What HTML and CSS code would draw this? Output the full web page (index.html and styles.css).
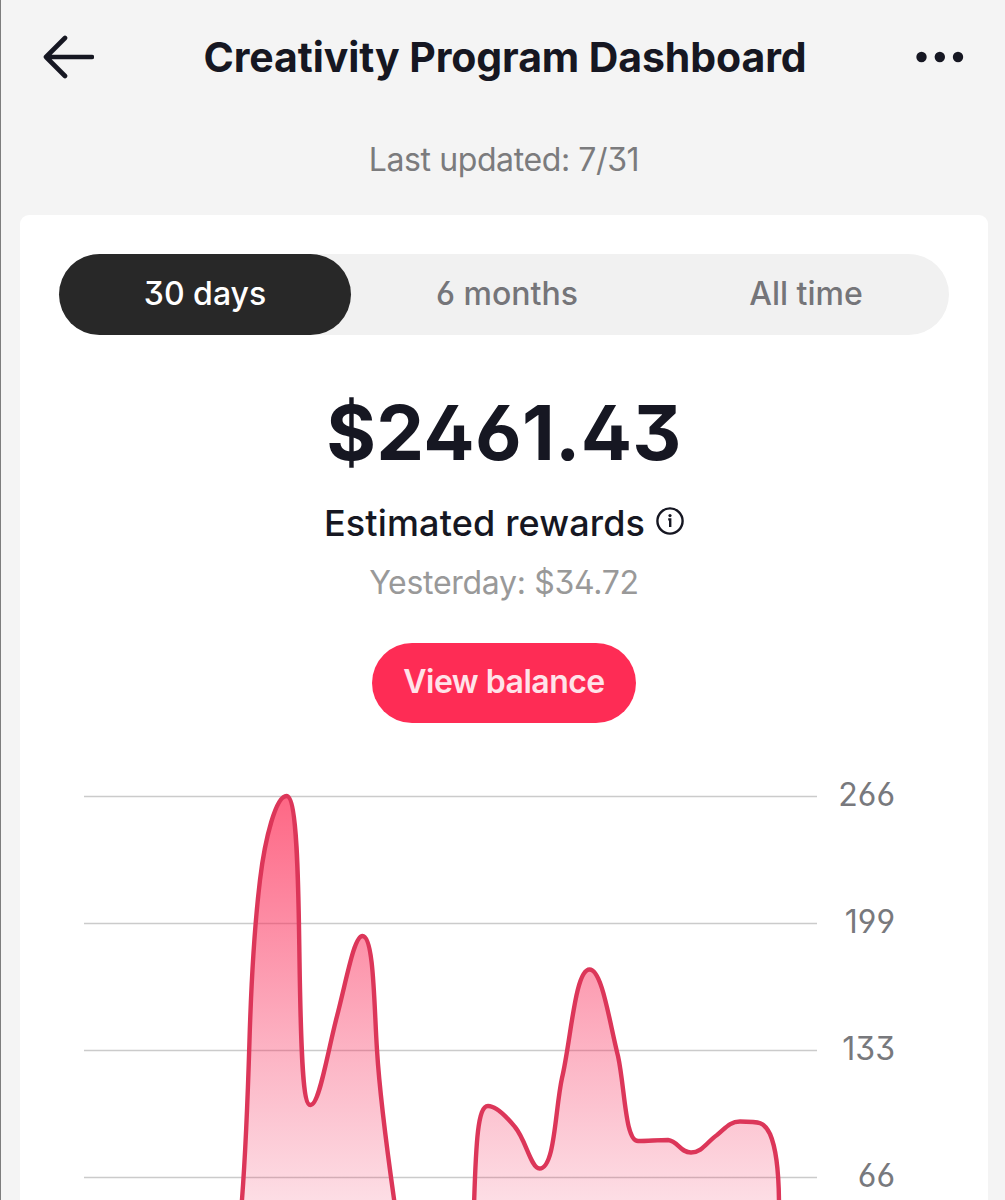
FILE: index.html
```html
<!DOCTYPE html>
<html lang="en">

<head>
    <meta charset="UTF-8">
    <title>Creativity Program Dashboard</title>
    <link rel="stylesheet" href="styles.css">
</head>

<body>
    <header class="topbar">
        <svg class="back" width="52" height="44" viewBox="0 0 52 44">
            <path d="M23 3 L4 22 L23 41 M4 22 H50" />
        </svg>
        <h1>Creativity Program Dashboard</h1>
        <svg class="more" width="48" height="12" viewBox="0 0 48 12">
            <circle cx="5.5" cy="6" r="5.2" />
            <circle cx="23.8" cy="6" r="5.2" />
            <circle cx="42" cy="6" r="5.2" />
        </svg>
    </header>
    <p class="updated">Last updated: 7/31</p>

    <main class="card">
        <div class="tabs">
            <div class="tab active">30 days</div>
            <div class="tab">6 months</div>
            <div class="tab">All time</div>
        </div>

        <div class="amount">$2461.43</div>
        <div class="rewards">
            <span>Estimated rewards</span>
            <svg class="info" width="28" height="28" viewBox="0 0 28 28">
                <circle class="ring" cx="14" cy="14" r="12.6" />
                <circle cx="14" cy="8.6" r="1.6" />
                <path d="M12.2 12.4 H14.2 V20" />
            </svg>
        </div>
        <div class="yesterday">Yesterday: $34.72</div>
        <div class="balance">View balance</div>

        <div class="chart">
            <svg class="plot" width="734" height="420" viewBox="84 780 734 420">
                <defs>
                    <linearGradient id="fade" gradientUnits="userSpaceOnUse" x1="0" y1="795" x2="0" y2="1200">
                        <stop offset="0" stop-color="#fe2c55" stop-opacity="0.72" />
                        <stop offset="0.32" stop-color="#fb2c58" stop-opacity="0.54" />
                        <stop offset="0.63" stop-color="#f82c5a" stop-opacity="0.36" />
                        <stop offset="1" stop-color="#f22c5a" stop-opacity="0.16" />
                    </linearGradient>
                </defs>
                <path class="grid" d="M84 796.5 H817 M84 923.5 H817 M84 1050.5 H817 M84 1177.5 H817" />
                <path class="area" d="M241.5 1206 C246 1150 248 1090 249.5 1040 C251 990 254 930 260 880 C265 838 276 796 286.5 796 C298 796 298.5 895 299.5 960 C301 1060 303 1105 310.5 1105 C319 1105 326 1060 336 1020 C347 978 354 936 362.5 936 C374 936 374 1005 377 1050 C380 1100 387 1150 395 1206" />
                <path class="area" d="M474 1206 C476 1140 478 1106 488 1106 C498 1106 510 1121 515 1127 C526 1140 531 1168.5 539.5 1168.5 C555 1168.5 555 1110 562 1078 C571 1040 575 969.5 589.5 969.5 C602 969.5 609 1020 618 1056 C625 1088 625 1141 638 1141 C648 1141 658 1140 668 1140 C678 1141 680 1152.5 691 1152.5 C702 1152.5 707 1142 717 1135 C725 1129 729 1121.5 740 1121.5 C760 1121.5 764 1122 770 1134 C777 1150 779 1180 779 1206" />
            </svg>
            <div class="scale">
                <span>266</span>
                <span>199</span>
                <span>133</span>
                <span>66</span>
            </div>
        </div>
    </main>
</body>

</html>
```
FILE: styles.css
```css
body {
    box-sizing: border-box;
    width: 1005px;
    height: 1200px;
    margin: 0;
    padding-right: 17px;
    padding-left: 19px;
    border-left: 1px solid #7d7d7d;
    background-color: #f4f4f4;
    color: #161722;
    font-family: Inter, "Liberation Sans", sans-serif;
    font-feature-settings: "ss01", "cv09";
    font-size: 32px;
    overflow: hidden;
}

.topbar {
    display: flex;
    align-items: center;
    justify-content: space-between;
    height: 113px;
    padding: 0 24px 0 22px;
}

.topbar h1 {
    margin: 0;
    font-size: 41px;
    font-weight: 700;
    letter-spacing: -0.1px;
    white-space: nowrap;
}

.back {
    fill: none;
    stroke: #161722;
    stroke-width: 4.6;
    stroke-linecap: round;
    stroke-linejoin: round;
}

.more {
    fill: #161722;
}

.updated {
    height: 94px;
    margin: 0 0 8px;
    color: #7b7b7d;
    letter-spacing: -0.4px;
    line-height: 94px;
    text-align: center;
}

.card {
    box-sizing: border-box;
    height: 985px;
    padding: 39px 39px 0;
    border-radius: 9px 9px 0 0;
    background-color: #fff;
    text-align: center;
}

.tabs {
    display: grid;
    grid-template-columns: 292px 312px 286px;
    height: 81px;
    border-radius: 41px;
    background-color: #f1f1f1;
    color: #757579;
    font-weight: 500;
    line-height: 79px;
}

.tab.active {
    border-radius: 41px;
    background-color: #282828;
    color: #fff;
}

.amount {
    height: 110px;
    margin-top: 42px;
    font-size: 76px;
    font-weight: 700;
    letter-spacing: 0.3px;
    line-height: 110px;
}

.rewards {
    display: flex;
    align-items: center;
    justify-content: center;
    gap: 11px;
    height: 60px;
    margin-top: 6px;
    font-size: 36px;
    font-weight: 500;
    letter-spacing: 0.15px;
}

.info {
    margin-bottom: 4px;
    fill: #161722;
}

.info .ring,
.info path {
    fill: none;
    stroke: #161722;
    stroke-width: 2.4;
}

.yesterday {
    height: 60px;
    color: #999;
    letter-spacing: -0.3px;
    line-height: 60px;
}

.balance {
    width: 264px;
    height: 80px;
    margin: 30px auto 0;
    border-radius: 40px;
    background-color: #fe2c55;
    color: #ffe3e9;
    font-weight: 600;
    letter-spacing: -0.5px;
    line-height: 78px;
}

.chart {
    display: flex;
    margin-top: 57px;
    padding-left: 25px;
}

.scale {
    display: flex;
    flex-direction: column;
    width: 77px;
    margin-top: -49px;
    color: #78797d;
    line-height: 127px;
    text-align: right;
}

.grid {
    fill: none;
    stroke: #cbcbcb;
    stroke-width: 1.3;
}

.area {
    fill: url(#fade);
    stroke: #dc3659;
    stroke-width: 4.4;
}
```
